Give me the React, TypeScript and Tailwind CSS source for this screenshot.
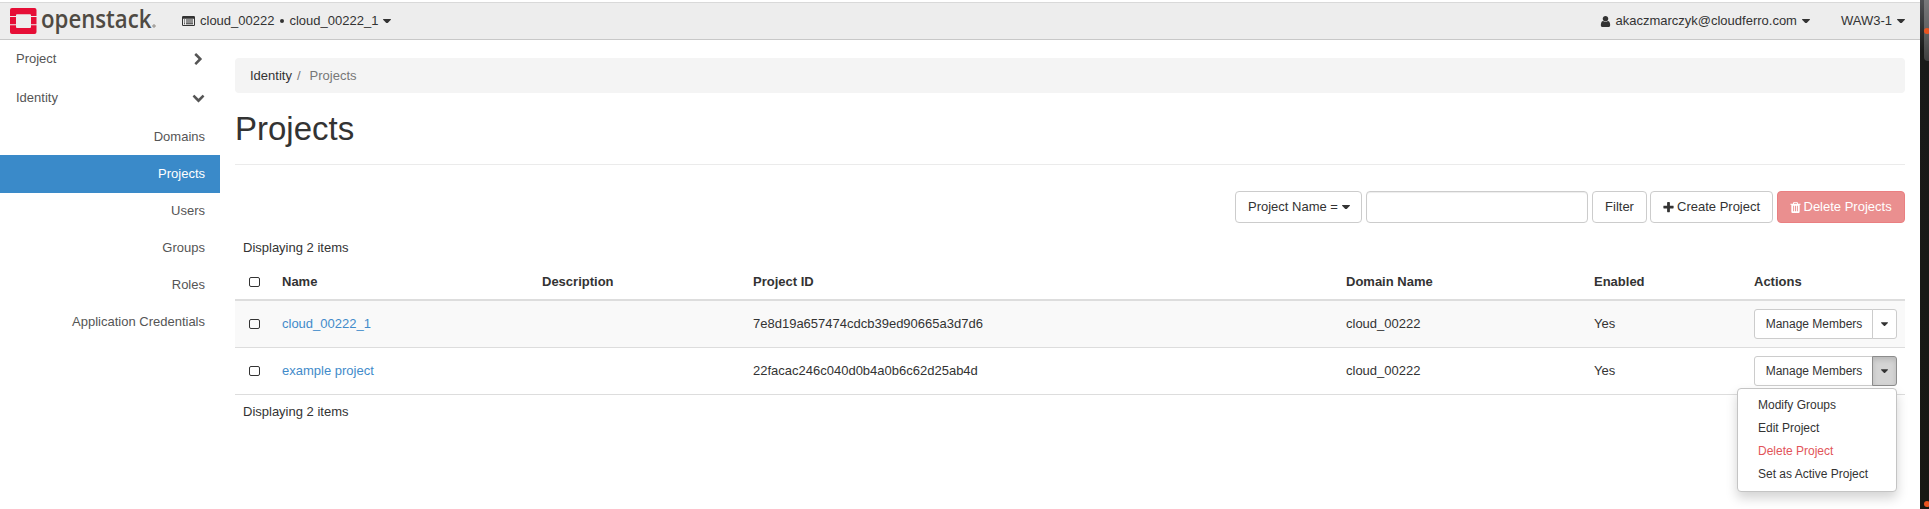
import React from "react";

const paths = {
  caret: "M1408 704q0 26-19 45l-448 448q-19 19-45 19t-45-19l-448-448q-19-19-19-45t19-45 45-19h896q26 0 45 19t19 45z",
  plus: "M1600 736v192q0 40-28 68t-68 28h-416v416q0 40-28 68t-68 28h-192q-40 0-68-28t-28-68v-416h-416q-40 0-68-28t-28-68v-192q0-40 28-68t68-28h416v-416q0-40 28-68t68-28h192q40 0 68 28t28 68v416h416q40 0 68 28t28 68z",
  user: "M1536 1399q0 109-62.5 187t-150.5 78h-854q-88 0-150.5-78t-62.5-187q0-85 8.5-160.5t31.5-152 58.5-131 94-89 134.5-34.5q131 128 313 128t313-128q76 0 134.5 34.5t94 89 58.5 131 31.5 152 8.5 160.5zm-256-887q0 159-112.5 271.5t-271.5 112.5-271.5-112.5-112.5-271.5 112.5-271.5 271.5-112.5 271.5 112.5 112.5 271.5z",
  right: "M1363 877l-742 742q-19 19-45 19t-45-19l-166-166q-19-19-19-45t19-45l531-531-531-531q-19-19-19-45t19-45l166-166q19-19 45-19t45 19l742 742q19 19 19 45t-19 45z",
  down: "M1683 808l-742 741q-19 19-45 19t-45-19l-742-741q-19-19-19-45.5t19-45.5l166-165q19-19 45-19t45 19l531 531 531-531q19-19 45-19t45 19l166 165q19 19 19 45.5t-19 45.5z",
  trash: "M704 1376v-704q0-14-9-23t-23-9h-64q-14 0-23 9t-9 23v704q0 14 9 23t23 9h64q14 0 23-9t9-23zm256 0v-704q0-14-9-23t-23-9h-64q-14 0-23 9t-9 23v704q0 14 9 23t23 9h64q14 0 23-9t9-23zm256 0v-704q0-14-9-23t-23-9h-64q-14 0-23 9t-9 23v704q0 14 9 23t23 9h64q14 0 23-9t9-23zm-544-992h448l-48-117q-7-9-17-11h-317q-10 2-17 11zm928 32v64q0 14-9 23t-23 9h-96v948q0 83-47 143.5t-113 60.5h-832q-66 0-113-58.5t-47-141.5v-952h-96q-14 0-23-9t-9-23v-64q0-14 9-23t23-9h309l70-167q15-37 54-63t79-26h320q40 0 79 26t54 63l70 167h309q14 0 23 9t9 23z",
};

function Icon({ name, className = "size-[13px]" }: { name: keyof typeof paths; className?: string }) {
  return (
    <svg viewBox="0 0 1792 1792" fill="currentColor" className={`shrink-0 ${className}`}>
      <path d={paths[name]} />
    </svg>
  );
}

function Caret({ className = "" }: { className?: string }) {
  return (
    <svg viewBox="384 640 1024 576" fill="currentColor" className={`h-[4.5px] w-2 shrink-0 ${className}`}>
      <path d={paths.caret} />
    </svg>
  );
}

function ListIcon() {
  return (
    <svg viewBox="0 0 13 10" className="h-[10px] w-[13px] shrink-0">
      <path
        fill="currentColor"
        fillRule="evenodd"
        d="M1.2 0h10.6A1.2 1.2 0 0 1 13 1.2v7.6a1.2 1.2 0 0 1-1.2 1.2H1.2A1.2 1.2 0 0 1 0 8.800V1.200A1.200 1.200 0 0 1 1.200 0zM1 2.800v5.900c0 .2.100.300.300.300h10.400c.2 0 .300-.1.300-.300V2.800z"
      />
      <path fill="currentColor" d="M2 3.500h1v1H2zM4 3.500h7v1H4zM2 5.400h1v1H2zM4 5.400h7v1H4zM2 7.300h1v1H2zM4 7.300h7v1H4z" />
    </svg>
  );
}

function Logo() {
  return (
    <svg width="150" height="36" viewBox="0 0 150 36" className="shrink-0 overflow-visible">
      <g fill="#e60e36">
        <path d="M2 5H24.500A2 2 0 0 1 26.500 7V13H21V12.300A1 1 0 0 0 20 11.300H7A1 1 0 0 0 6 12.300V13H0V7A2 2 0 0 1 2 5z" />
        <path d="M0 14h6v7.200H0zM21 14h5.500v7.200H21z" />
        <path d="M0 22.200H6V24A1 1 0 0 0 7 25H20A1 1 0 0 0 21 24V22.200H26.500V29A2 2 0 0 1 24.500 31H2A2 2 0 0 1 0 29z" />
      </g>
      <text x="31" y="24.500" fontSize="25" fontWeight="600" textLength="110.500" lengthAdjust="spacingAndGlyphs" fill="#4f4a43" fontFamily="Open Sans, sans-serif">
        openstack
      </text>
      <circle cx="144" cy="23" r="1.300" fill="#b5b2ae" stroke="#99958f" strokeWidth=".8" />
    </svg>
  );
}

const navItems = ["Domains", "Projects", "Users", "Groups", "Roles", "Application Credentials"];

const projects = [
  { name: "cloud_00222_1", id: "7e8d19a657474cdcb39ed90665a3d7d6", open: false },
  { name: "example project", id: "22facac246c040d0b4a0b6c62d25ab4d", open: true },
];

const columns = "grid grid-cols-[39px_260px_211px_593px_248px_160px_159px] items-center";
const button = "flex h-8 items-center rounded-[4px] border border-[#ccc] bg-white";

function Checkbox() {
  return <span className="ml-[14px] block h-[10px] w-[11px] rounded-[2px] border border-[#333]" />;
}

function Actions({ open }: { open: boolean }) {
  return (
    <div className="relative flex h-[30px] w-[143px] text-xs">
      <button className="h-full w-[119px] rounded-l-[3px] border border-[#ccc] bg-white pl-px">Manage Members</button>
      <button
        className={
          open
            ? "-ml-px flex h-full w-[25px] items-center justify-center rounded-r-[3px] border border-[#8c8c8c] bg-[#d4d4d4] shadow-[inset_0_3px_5px_rgba(0,0,0,0.125)]"
            : "-ml-px flex h-full w-[25px] items-center justify-center rounded-r-[3px] border border-[#ccc] bg-white"
        }
      >
        <Caret className="h-1 w-[7px]" />
      </button>
      {open && (
        <ul className="absolute top-8 right-0 z-10 h-[104px] w-[160px] rounded-[4px] border border-[#c4c4c4] bg-white pt-[5px] shadow-[0_6px_12px_rgba(0,0,0,0.175)]">
          <li className="h-[23px] pl-5 leading-[23px]">Modify Groups</li>
          <li className="h-[23px] pl-5 leading-[23px]">Edit Project</li>
          <li className="h-[23px] pl-5 leading-[23px] text-[#e25459]">Delete Project</li>
          <li className="h-[23px] pl-5 leading-[23px]">Set as Active Project</li>
        </ul>
      )}
    </div>
  );
}

export default function App() {
  return (
    <div className="flex h-[509px] w-[1929px] overflow-hidden bg-white font-['Liberation_Sans',Arial,sans-serif] text-[13px] leading-[18px] text-[#333]">
      <div className="flex w-[1920px] flex-col">
        <header className="mt-[2px] flex h-[38px] shrink-0 items-center border-t border-b border-t-[#d9d9d9] border-b-[#c8c8c8] bg-[#ededed] pl-[10px]">
          <Logo />
          <div className="ml-[22px] flex items-center">
            <ListIcon />
            <span className="ml-[5px]">cloud_00222</span>
            <span className="ml-[6px] mr-[5px] size-1 rounded-full bg-[#333]" />
            <span>cloud_00222_1</span>
            <Caret className="ml-[5px]" />
          </div>
          <div className="ml-auto flex items-center pr-[15px]">
            <Icon name="user" />
            <span className="ml-[3px]">akaczmarczyk@cloudferro.com</span>
            <Caret className="ml-[5px]" />
            <span className="ml-[31px]">WAW3-1</span>
            <Caret className="ml-[5px]" />
          </div>
        </header>
        <div className="flex">
          <nav className="w-[220px] shrink-0 text-[#555]">
            <div className="flex h-[38px] items-center justify-between pr-[15px] pl-4">
              Project
              <Icon name="right" />
            </div>
            <div className="mb-px flex h-[39px] items-center justify-between pr-[15px] pl-4">
              Identity
              <Icon name="down" />
            </div>
            <ul className="text-right">
              {navItems.map((item) => (
                <li
                  key={item}
                  className={
                    item === "Projects"
                      ? "-mb-px h-[38px] bg-[#3a8ac9] pr-[15px] leading-[38px] text-white"
                      : "h-[37px] pr-[15px] leading-[37px]"
                  }
                >
                  {item}
                </li>
              ))}
            </ul>
          </nav>
          <main className="ml-[15px] w-[1670px] pt-[18px]">
            <div className="flex h-[35px] items-center rounded-[4px] bg-[#f4f4f4] pl-[15px]">
              <span>Identity</span>
              <span className="ml-[5px] text-[#777]">/</span>
              <span className="ml-[9px] text-[#777]">Projects</span>
            </div>
            <h1 className="h-[71px] pt-[18px] text-[33px] leading-9">Projects</h1>
            <div className="h-px bg-[#ebebeb]" />
            <div className="mt-[26px] flex h-8 justify-end">
              <button className={`${button} w-[127px] pl-3`}>
                Project Name =<Caret className="ml-[4px]" />
              </button>
              <input className="ml-1 h-8 w-[222px] rounded-[4px] border border-[#ccc] bg-white shadow-[inset_0_1px_1px_rgba(0,0,0,0.075)]" />
              <button className={`${button} ml-1 w-[55px] justify-center`}>Filter</button>
              <button className={`${button} ml-[3px] w-[123px] pl-[11px]`}>
                <Icon name="plus" />
                <span className="ml-[2px]">Create Project</span>
              </button>
              <button className="ml-1 flex h-8 w-32 items-center rounded-[4px] border border-[#ea7f81] bg-[#ea8f8f] pl-[11px] text-white">
                <Icon name="trash" />
                <span className="ml-[1.5px]">Delete Projects</span>
              </button>
            </div>
            <div className="mt-4 pl-2">Displaying 2 items</div>
            <div className={`${columns} mt-[7px] h-[37px] border-b-2 border-[#ddd] font-bold`}>
              <Checkbox />
              <span className="pl-2">Name</span>
              <span className="pl-2">Description</span>
              <span className="pl-2">Project ID</span>
              <span className="pl-2">Domain Name</span>
              <span className="pl-2">Enabled</span>
              <span className="pl-2">Actions</span>
            </div>
            {projects.map((p) => (
              <div key={p.id} className={`${columns} h-[47px] border-b border-[#ddd] ${p.open ? "bg-white" : "bg-[#f9f9f9]"}`}>
                <Checkbox />
                <a className="pl-2 text-[#428bca]">{p.name}</a>
                <span />
                <span className="pl-2">{p.id}</span>
                <span className="pl-2">cloud_00222</span>
                <span className="pl-2">Yes</span>
                <div className="pl-2">
                  <Actions open={p.open} />
                </div>
              </div>
            ))}
            <div className="mt-2 pl-2">Displaying 2 items</div>
          </main>
        </div>
      </div>
      <aside className="flex w-[9px] flex-col items-end justify-between overflow-hidden bg-linear-to-b from-[#4d4f52] from-0% via-[#191a19] via-10% to-[#171813] to-100%">
        <div className="flex h-[61px] w-[5px] items-center rounded-bl-[4px] bg-linear-to-b from-[#77787a] via-[#616262] to-[#3e3f3f]">
          <span className="size-[6px] shrink-0 rounded-full bg-[#e95420]" />
        </div>
        <span className="mb-[2px] -mr-px size-[6px] rounded-full bg-[#e95420]" />
      </aside>
    </div>
  );
}
